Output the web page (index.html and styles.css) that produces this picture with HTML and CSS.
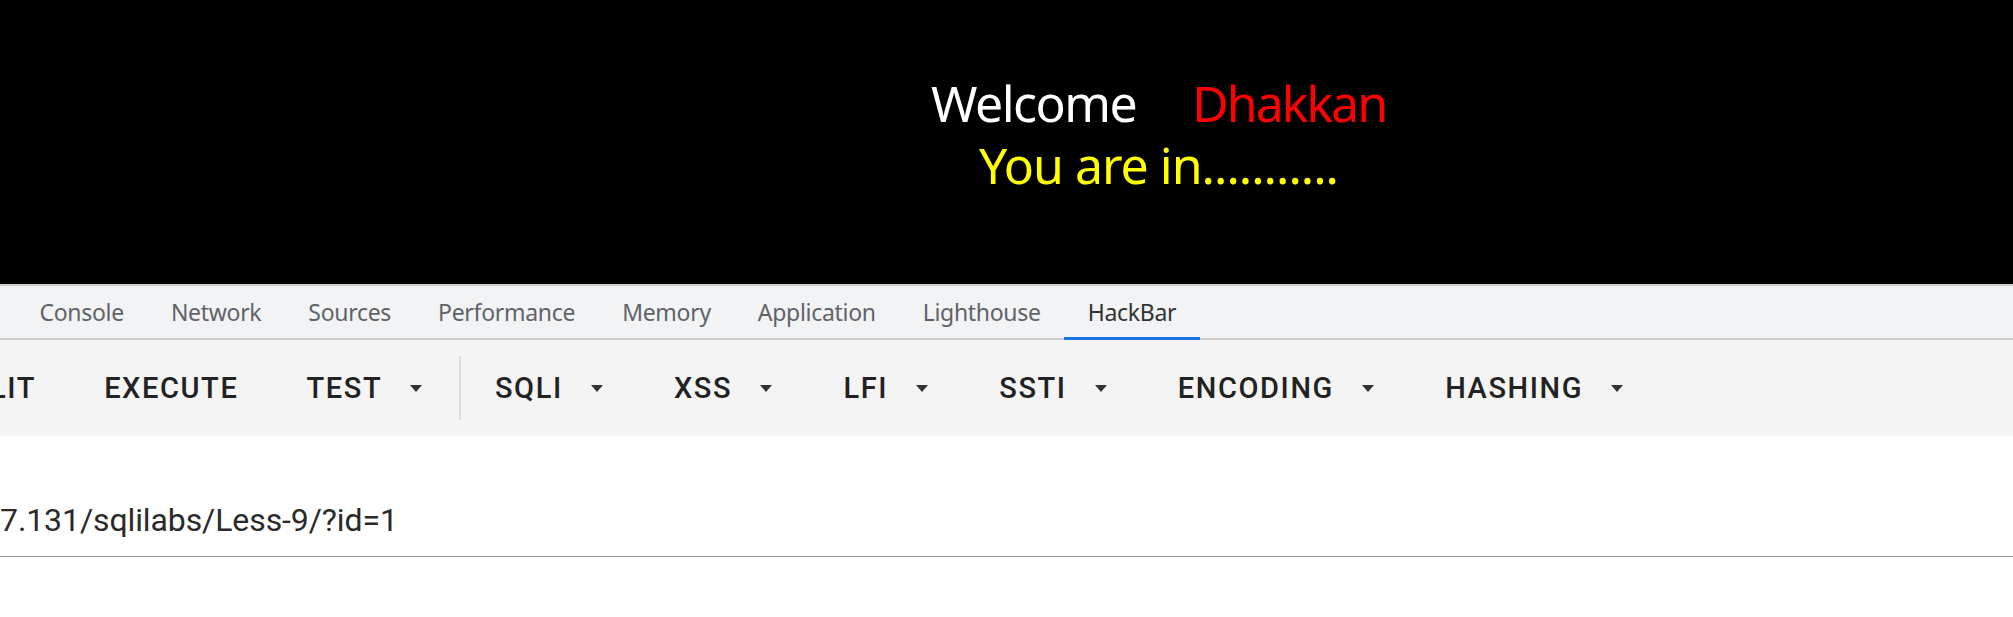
FILE: index.html
```html
<!DOCTYPE html>
<html lang="en">
<head>
<meta charset="utf-8">
<title>Less-9 HackBar</title>
<link rel="stylesheet" href="styles.css">
</head>
<body>
<div class="page">
  <section class="hero">
    <div class="line">
      <span class="welcome">Welcome</span><span class="name">Dhakkan</span>
    </div>
    <div class="line">
      <span class="status">You are in...........</span>
    </div>
  </section>

  <nav class="tabs">
    <div class="tab">Console</div>
    <div class="tab">Network</div>
    <div class="tab">Sources</div>
    <div class="tab">Performance</div>
    <div class="tab">Memory</div>
    <div class="tab">Application</div>
    <div class="tab">Lighthouse</div>
    <div class="tab active">HackBar</div>
  </nav>

  <div class="toolbar">
    <div class="btn first">LIT</div>
    <div class="btn">EXECUTE</div>
    <div class="btn">TEST<span class="caret"></span></div>
    <div class="sep"></div>
    <div class="btn">SQLI<span class="caret"></span></div>
    <div class="btn">XSS<span class="caret"></span></div>
    <div class="btn">LFI<span class="caret"></span></div>
    <div class="btn">SSTI<span class="caret"></span></div>
    <div class="btn">ENCODING<span class="caret"></span></div>
    <div class="btn">HASHING<span class="caret"></span></div>
  </div>

  <div class="url-area">
    <div class="url-field">7.131/sqlilabs/Less-9/?id=1</div>
  </div>
</div>
</body>
</html>
```

FILE: styles.css
```css
* {
  box-sizing: border-box;
}

html, body {
  margin: 0;
  padding: 0;
  background: #ffffff;
}

.page {
  width: 2013px;
  height: 617px;
  overflow: hidden;
}

.hero {
  height: 284px;
  background: #000000;
  padding-top: 72px;
  padding-left: 304px;
  display: flex;
  flex-direction: column;
  align-items: center;
  font-family: "Noto Sans", "Open Sans", sans-serif;
  font-size: 50px;
  line-height: 62px;
  letter-spacing: -1.5px;
}

.line {
  white-space: nowrap;
}

.welcome {
  color: #ffffff;
}

.name {
  color: #ff0000;
  margin-left: 56px;
  letter-spacing: -2px;
}

.status {
  color: #ffff00;
  letter-spacing: -1px;
}

.tabs {
  display: flex;
  align-items: stretch;
  height: 56px;
  background: #f1f3f4;
  border-top: 2px solid #cbcdd1;
  border-bottom: 2px solid #cbcdd1;
  padding-left: 16px;
  font-family: "Noto Sans", "Open Sans", sans-serif;
  font-size: 23px;
  letter-spacing: -0.3px;
  color: #5f6368;
}

.tab {
  display: flex;
  align-items: center;
  padding: 0 23.5px;
  margin-bottom: -2px;
  border-bottom: 3px solid transparent;
  white-space: nowrap;
}

.tab.active {
  color: #333333;
  border-bottom-color: #1a73e8;
}

.toolbar {
  display: flex;
  align-items: center;
  height: 96px;
  background: #f4f4f4;
  font-family: Roboto, "Liberation Sans", sans-serif;
  font-weight: 500;
  font-size: 29px;
  letter-spacing: 1.6px;
  color: #222222;
}

.btn {
  display: flex;
  align-items: center;
  padding: 0 34.1px;
  white-space: nowrap;
}

.btn.first {
  padding-left: 0;
  margin-left: -10px;
}

.caret {
  display: inline-block;
  width: 0;
  height: 0;
  margin-left: 28px;
  margin-right: 3px;
  border-left: 6.5px solid transparent;
  border-right: 6.5px solid transparent;
  border-top: 7px solid #333333;
}

.sep {
  width: 1.5px;
  height: 64px;
  background: #dcdcdc;
}

.url-area {
  background: #ffffff;
  padding-top: 64px;
}

.url-field {
  font-family: Roboto, "Liberation Sans", sans-serif;
  font-size: 32px;
  line-height: 40px;
  letter-spacing: -0.1px;
  color: #2a2a2a;
  padding-bottom: 16px;
  border-bottom: 1.5px solid #949494;
  white-space: nowrap;
}
```
